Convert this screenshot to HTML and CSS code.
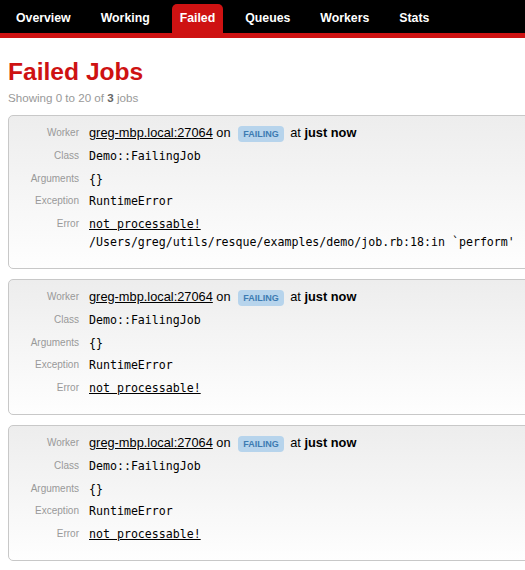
FILE: index.html
```html
<!DOCTYPE html>
<html>
<head>
<meta charset="utf-8">
<title>Failed Jobs</title>
<link rel="stylesheet" href="styles.css">
</head>
<body>
<nav class="nav">
  <ul class="tabs">
    <li><a href="#">Overview</a></li>
    <li><a href="#">Working</a></li>
    <li class="current"><a href="#">Failed</a></li>
    <li><a href="#">Queues</a></li>
    <li><a href="#">Workers</a></li>
    <li><a href="#">Stats</a></li>
  </ul>
</nav>
<main class="content">
  <h1 class="title">Failed Jobs</h1>
  <p class="sub">Showing 0 to 20 of <b>3</b> jobs</p>

  <ul class="failed">
    <li class="job">
      <dl>
        <div class="row"><dt>Worker</dt><dd class="sans"><a href="#">greg-mbp.local:27064</a> on <span class="queue">failing</span> at <b>just now</b></dd></div>
        <div class="row"><dt>Class</dt><dd class="mono">Demo::FailingJob</dd></div>
        <div class="row"><dt>Arguments</dt><dd class="mono">{}</dd></div>
        <div class="row"><dt>Exception</dt><dd class="mono">RuntimeError</dd></div>
        <div class="row"><dt>Error</dt><dd class="mono"><a href="#">not processable!</a><br>/Users/greg/utils/resque/examples/demo/job.rb:18:in `perform'</dd></div>
      </dl>
    </li>
    <li class="job">
      <dl>
        <div class="row"><dt>Worker</dt><dd class="sans"><a href="#">greg-mbp.local:27064</a> on <span class="queue">failing</span> at <b>just now</b></dd></div>
        <div class="row"><dt>Class</dt><dd class="mono">Demo::FailingJob</dd></div>
        <div class="row"><dt>Arguments</dt><dd class="mono">{}</dd></div>
        <div class="row"><dt>Exception</dt><dd class="mono">RuntimeError</dd></div>
        <div class="row"><dt>Error</dt><dd class="mono"><a href="#">not processable!</a></dd></div>
      </dl>
    </li>
    <li class="job">
      <dl>
        <div class="row"><dt>Worker</dt><dd class="sans"><a href="#">greg-mbp.local:27064</a> on <span class="queue">failing</span> at <b>just now</b></dd></div>
        <div class="row"><dt>Class</dt><dd class="mono">Demo::FailingJob</dd></div>
        <div class="row"><dt>Arguments</dt><dd class="mono">{}</dd></div>
        <div class="row"><dt>Exception</dt><dd class="mono">RuntimeError</dd></div>
        <div class="row"><dt>Error</dt><dd class="mono"><a href="#">not processable!</a></dd></div>
      </dl>
    </li>
  </ul>
</main>
</body>
</html>
```
FILE: styles.css
```css
html, body {
  margin: 0;
  padding: 0;
  background: #fff;
}
body {
  font-family: "Liberation Sans", Arial, sans-serif;
  color: #000;
  overflow-x: hidden;
}
.nav {
  background: #000;
  border-bottom: 5px solid #ce1212;
  height: 33px;
}
.tabs {
  list-style: none;
  margin: 0;
  padding: 4px 0 0 8px;
  display: flex;
  gap: 14px;
}
.tabs a {
  display: block;
  height: 29px;
  line-height: 29px;
  padding: 0 8px;
  color: #fff;
  font-weight: bold;
  font-size: 12.3px;
  text-decoration: none;
  border-radius: 5px 5px 0 0;
}
.tabs .current a {
  background: #ce1212;
}
.content {
  padding: 0 0 0 8px;
  overflow: hidden;
}
.title {
  margin: 19px 0 0;
  font-size: 24.6px;
  line-height: 30px;
  color: #ce1212;
  font-weight: bold;
}
.sub {
  margin: 3px 0 0;
  font-size: 11.6px;
  line-height: 15px;
  color: #999;
}
.sub b {
  color: #666;
}
.failed {
  list-style: none;
  margin: 10px -30px 0 0;
  padding: 0;
  display: flex;
  flex-direction: column;
  gap: 10px;
}
.job {
  border: 1px solid #c8c8c8;
  border-radius: 5px;
  background: linear-gradient(#ededed, #fefefe);
  padding: 8px 0 17px;
}
.job dl {
  margin: 0;
  display: flex;
  flex-direction: column;
  gap: 4.75px;
}
.row {
  display: flex;
  align-items: flex-start;
  gap: 10px;
  line-height: 18px;
}
.row dt {
  width: 70px;
  flex: none;
  text-align: right;
  font-size: 10px;
  color: #999;
  line-height: 18px;
  height: 18px;
}
.row dd {
  margin: 0;
  line-height: 18px;
}
.sans {
  font-size: 12.8px;
  height: 18px;
}
.sans a {
  color: #000;
}
.mono {
  font-family: "DejaVu Sans Mono", monospace;
  font-size: 11.6px;
}
.mono a {
  color: #000;
}
.queue {
  display: inline-block;
  background: #b7d4ec;
  color: #3d7bb2;
  text-transform: uppercase;
  font-weight: bold;
  font-size: 9px;
  line-height: 16px;
  padding: 0 5px;
  border-radius: 4px;
  margin: 0 3px 0 4px;
  vertical-align: 0;
}
```
